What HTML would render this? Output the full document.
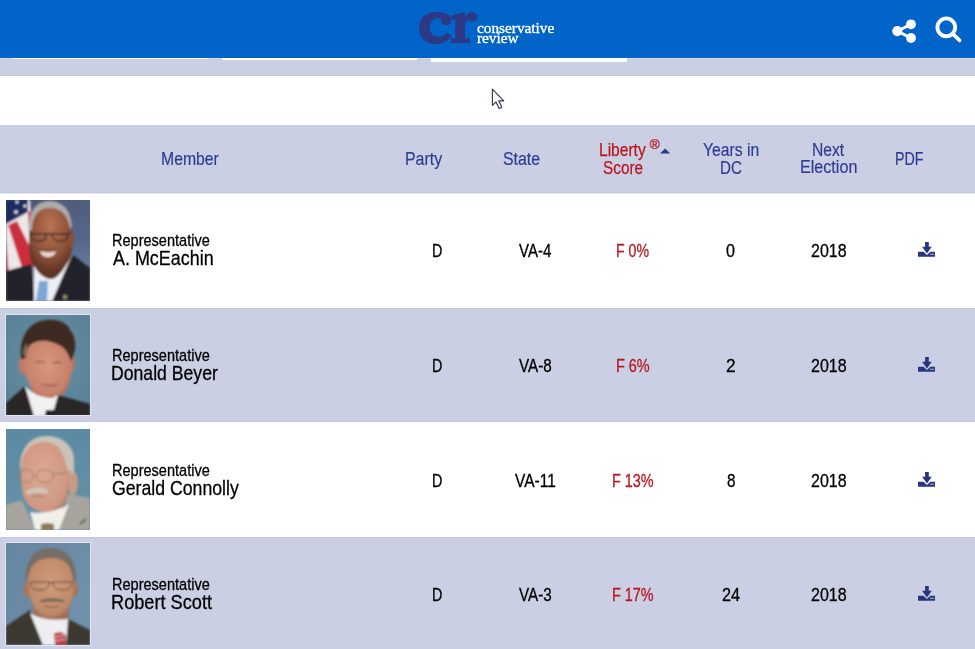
<!DOCTYPE html>
<html><head><meta charset="utf-8"><style>
html,body{margin:0;padding:0;width:975px;height:649px;overflow:hidden;background:#fff;position:relative}
.t{position:absolute;font-family:"Liberation Sans",sans-serif;line-height:1;white-space:nowrap;transform-origin:0 0;-webkit-text-stroke-color:currentColor}
.b{position:absolute;left:0;width:975px}
.ic{position:absolute}
.ph{position:absolute;left:6px;width:84px;outline:1px solid rgba(255,255,255,.45)}
</style></head><body>
<div class="b" style="top:0;height:58px;background:#0064c8"></div>
<div class="b" style="top:58px;height:18px;background:#cbcfe4;border-bottom:1px solid #c6c9df;box-sizing:border-box"></div>
<div class="b" style="top:58px;height:1px;background:#ddd9e6"></div>
<div style="position:absolute;left:13px;top:58px;width:195px;height:1px;background:#fff"></div>
<div style="position:absolute;left:222px;top:58px;width:195px;height:2px;background:#fff"></div>
<div style="position:absolute;left:431px;top:58px;width:196px;height:4px;background:#fff"></div>
<div class="b" style="top:125px;height:68px;background:#cbcfe4"></div>
<div class="b" style="top:192px;height:1px;background:#c6cae0"></div><div class="b" style="top:193px;height:1px;background:#e6e8f2"></div>
<div class="b" style="top:308px;height:114px;background:#cbcfe4;border-top:1px solid #c4c8de;border-bottom:1px solid #c4c8de;box-sizing:border-box"></div>
<div class="b" style="top:537px;height:112px;background:#cbcfe4;border-top:1px solid #c4c8de;box-sizing:border-box"></div>
<svg style="position:absolute;left:0;top:0" width="560" height="50" viewBox="0 0 560 50">
<path fill="#2c3a86" d="M451.5 19C451 14.5 444.5 12 436 12C425 12 419 19 419 28.5C419 38 426 44 436 44C443 44 448 41 452 36L447 32.5C445 35 442 36.7 439 36.7C433 36.7 429.8 33 429.8 27.5C429.8 22 433 18.2 438 18.2C440 18.2 441 19 441 20C440.5 22.5 442 25 446 25C449.5 25 451.5 22.5 451.5 19Z"/>
<path fill="#2c3a86" d="M451.8 15.2L463.5 12.3H465V17C467 13.5 470 12.3 472.5 12.3C475.5 12.3 477.4 14.5 477.4 17C477.4 19.5 475.5 21.5 472.5 21.5C470 21.5 468.5 20.5 467.5 19.5C466 21 465 23 465 25.5V38.2H470V43.1H450.9V38.2H455.2V19.7H451.8Z"/>
</svg>
<div style="position:absolute;left:476.5px;top:22.6px;font-family:'Liberation Serif',serif;font-weight:normal;font-size:15.6px;line-height:10.8px;color:#fff;transform:scaleX(0.98);-webkit-text-stroke:0.35px #fff;transform-origin:0 0;white-space:nowrap">conservative<br>review</div>
<svg style="position:absolute;left:880px;top:5px" width="90" height="45" viewBox="880 5 90 45">
<g fill="#fff"><circle cx="897.3" cy="31.1" r="5.1"/><circle cx="911" cy="24.3" r="4.9"/><circle cx="911" cy="38" r="4.9"/></g>
<path d="M897.3 31.1L911 24.3M897.3 31.1L911 38" stroke="#fff" stroke-width="2.9"/>
<circle cx="946.3" cy="27.3" r="8.9" fill="none" stroke="#fff" stroke-width="3.9"/>
<path d="M953.6 34.6L959.6 40.4" stroke="#fff" stroke-width="3.6" stroke-linecap="round"/>
</svg>
<div class="t" style="left:649.8px;top:137.6px;font-size:13.5px;color:#b9161f;-webkit-text-stroke-width:0.3px">&reg;</div>
<svg style="position:absolute;left:659px;top:147px" width="13" height="8" viewBox="659 147 13 8"><path d="M660 153.4L665.1 148.4L670.3 153.4Z" fill="#2b3a8a"/></svg>
<svg style="position:absolute;left:490px;top:87px" width="18" height="24" viewBox="0 0 18 24">
<path d="M2.4 2.2V18.3L6 15l3.2 6.4 2.6-1.2-3-6.3h4.9z" fill="#fff" stroke="#343a50" stroke-width="1.15" stroke-linejoin="round"/></svg>
<svg class="ph" style="top:200px" width="84" height="101" viewBox="0 0 84 101">
<defs><filter id="bl1" x="-5%" y="-5%" width="110%" height="110%"><feGaussianBlur stdDeviation="0.8"/></filter>
<linearGradient id="bg1" x1="0" y1="0" x2=".3" y2="1"><stop offset="0" stop-color="#4c5575"/><stop offset=".6" stop-color="#56668a"/><stop offset="1" stop-color="#6f82a4"/></linearGradient>
<radialGradient id="fc1" cx=".5" cy=".32" r=".62"><stop offset="0" stop-color="#ba7454"/><stop offset=".7" stop-color="#8c5038"/><stop offset="1" stop-color="#623626"/></radialGradient></defs>
<rect width="84" height="101" fill="url(#bg1)"/>
<g filter="url(#bl1)">
<path d="M0 0h24l1 16 1 60H0z" fill="#ece8ea"/>
<path d="M2 25l9-4 15 30v20l-8 3z" fill="#cc2f3e"/><path d="M0 62l4 14H0z" fill="#cc2f3e"/>
<path d="M22 12l3-1 1 20-3-2z" fill="#cc2f3e"/>
<path d="M0 40l3 36H0z" fill="#cc2f3e"/>
<path d="M0 0h22v12L0 24z" fill="#1e2a5e"/>
<g fill="#eeeef2"><circle cx="10" cy="12" r="1.8"/><circle cx="19" cy="6" r="1.6"/><circle cx="11" cy="2" r="1.5"/></g>
<path d="M27 56h38l-2 26H29z" fill="#5a3223"/><path d="M23 34C22 14 30 3 44 3s22 10 22 28l0 16c-1 16-8 28-22 29-14-1-21-13-21-29z" fill="url(#fc1)"/>
<path d="M23 30C22 12 30 1 43 1c13 0 22 8 23 26l-2 2C62 16 56 8 44 8 32 8 26 16 26 30z" fill="#aeaaa8"/>
<ellipse cx="65" cy="40" rx="3" ry="8" fill="#8a5038"/>
<g fill="none" stroke="#3a2a26" stroke-width="1.4"><path d="M25 34h15c1 5-2 7-7 7s-8-3-8-7z"/><path d="M46 34h16c0 5-3 7-8 7s-8-3-8-7z"/><path d="M40 34h6M62 34l3-2"/></g>
<path d="M34 51c5 1.5 11 1.5 16 0-1 4-4 6-8 6s-7-2-8-6z" fill="#e8d8d0"/><path d="M33 50c6 1 12 1 18 0" stroke="#5a3028" stroke-width="1.2" fill="none"/>
<path d="M0 71l25-7 4 37H0z" fill="#222229"/>
<path d="M84 68L67 55 46 101h38z" fill="#222229"/>
<path d="M28 66c5 8 11 13 17 13s12-8 21-24l-20 46H28z" fill="#eef0f4"/>
<path d="M33 81h9l-1 20H30z" fill="#7da6d6"/>
<circle cx="59" cy="97" r="2.2" fill="#9c8a68"/>
</g></svg>
<svg class="ph" style="top:315px" width="84" height="100" viewBox="0 0 84 100">
<defs><filter id="bl2" x="-5%" y="-5%" width="110%" height="110%"><feGaussianBlur stdDeviation="0.8"/></filter>
<radialGradient id="bg2" cx=".5" cy=".45" r=".75"><stop offset="0" stop-color="#6692a8"/><stop offset="1" stop-color="#587e92"/></radialGradient>
<radialGradient id="fc2" cx=".5" cy=".45" r=".6"><stop offset="0" stop-color="#d8977c"/><stop offset=".8" stop-color="#c7806a"/><stop offset="1" stop-color="#a86652"/></radialGradient></defs>
<rect width="84" height="100" fill="url(#bg2)"/>

<g filter="url(#bl2)">
<ellipse cx="16.5" cy="50" rx="3.8" ry="9.5" fill="#c07a64"/><ellipse cx="66" cy="49" rx="3" ry="8" fill="#b87460"/>
<path d="M22 60l30 0 2 24-26 4z" fill="#b87060"/><path d="M17 38C17 28 28 22 42 22s24 8 24 22c0 10-1 18-4 27-4 8-9 13-16 13s-15-4-21-12c-5-8-8-18-8-34z" fill="url(#fc2)"/>
<path d="M15 44C13 22 22 7 40 5c14-1 22 4 24 10 4 4 6 12 5 20l-4 12c-2-8-6-14-12-17-8-4-18-6-26-2-4 2-7 7-8 16z" fill="#3e2c22"/>
<path d="M17 40c0-6 2-10 4-12v14z" fill="#7a6a60"/>
<path d="M30 47c4-1 7 0 9 1M47 48c3-1 6-1 9 0" stroke="#8a5a50" stroke-width="1.3" fill="none"/>
<path d="M36 69c5 2 11 2 16 0" stroke="#9c5a50" stroke-width="1.8" fill="none"/>
<path d="M0 88L19 71 28 101H0z" fill="#2b2826"/>
<path d="M84 89L52 80 46 101H84z" fill="#2b2826"/>
<path d="M19 71c6 7 16 12 27 12l6-3-6 21H28z" fill="#f1f1f4"/><path d="M40 95h8l1 6h-10z" fill="#23222c"/>

</g></svg>
<svg class="ph" style="top:429px" width="84" height="101" viewBox="0 0 84 101">
<defs><filter id="bl3" x="-5%" y="-5%" width="110%" height="110%"><feGaussianBlur stdDeviation="0.8"/></filter>
<linearGradient id="bg3" x1="0" y1="0" x2="0" y2="1"><stop offset="0" stop-color="#5c8aa2"/><stop offset="1" stop-color="#6592a8"/></linearGradient>
<radialGradient id="fc3" cx=".45" cy=".45" r=".65"><stop offset="0" stop-color="#dca894"/><stop offset=".8" stop-color="#d09882"/><stop offset="1" stop-color="#b07a68"/></radialGradient></defs>
<rect width="84" height="101" fill="url(#bg3)"/>
<g filter="url(#bl3)">
<ellipse cx="67" cy="54" rx="5" ry="12" fill="#c99a86"/><path d="M14 40C13 20 24 7 40 7c15 0 27 8 28 23v14l-6 2z" fill="#c9c3b8"/><path d="M15 42C15 24 22 14 38 13c10 0 17 5 20 16l5 16c0 16-1 26-7 33-6 5-12 6-18 5-10-1-18-7-21-17-2-8-2-16-2-24z" fill="url(#fc3)"/>



<g fill="none" stroke="#9a7c58" stroke-width="1"><ellipse cx="19.5" cy="47" rx="8.5" ry="6.5"/><ellipse cx="39" cy="47" rx="8.5" ry="6.5"/><path d="M47.5 45.5l19-3"/></g>
<path d="M20 62c7-4 14-4 21-1l1 4c-7-2-14-2-21 1z" fill="#cfc8bc"/>
<path d="M26 68c4-1 8-1 12 0" stroke="#a06a5a" stroke-width="1.2" fill="none"/>
<path d="M0 76l16-5 13 30H0z" fill="#a7a49d"/>
<path d="M84 69l-22-4-9 36h31z" fill="#a7a49d"/>
<path d="M24 83c10 2 26 0 39-8l-10 26H29z" fill="#f0efea"/>
<path d="M35 95l6-1 7 1v6H35z" fill="#8e7c58"/>
<path d="M80 90l-6 5" stroke="#2a2a2a" stroke-width="1.2"/>
</g></svg>
<svg class="ph" style="top:543px" width="84" height="102" viewBox="0 0 84 102">
<defs><filter id="bl4" x="-5%" y="-5%" width="110%" height="110%"><feGaussianBlur stdDeviation="0.8"/></filter>
<linearGradient id="bg4" x1="0" y1="0" x2="1" y2=".6"><stop offset="0" stop-color="#6685a0"/><stop offset="1" stop-color="#7190ac"/></linearGradient>
<radialGradient id="fc4" cx=".5" cy=".45" r=".6"><stop offset="0" stop-color="#d09c7c"/><stop offset=".8" stop-color="#c08a6a"/><stop offset="1" stop-color="#9c6850"/></radialGradient></defs>
<rect width="84" height="102" fill="url(#bg4)"/>

<g filter="url(#bl4)">
<ellipse cx="21" cy="47" rx="3.5" ry="8" fill="#a8755a"/><ellipse cx="69" cy="46" rx="3" ry="8" fill="#a8755a"/>
<path d="M27 58h36l-1 22H28z" fill="#a06c52"/>
<path d="M22 36c0-14 10-22 23-22s23 8 23 22c0 14-2 24-6 30-4 6-10 9-17 9s-12-3-16-9c-4-6-7-16-7-30z" fill="url(#fc4)"/>
<path d="M20 40C18 18 28 5 44 5c16 0 26 10 26 30l-2 6-3-14c-3-8-10-12-20-12s-18 4-21 12z" fill="#746d66"/>
<g fill="none" stroke="#4e4038" stroke-width="0.9"><path d="M24 39h19c0 6-3 8-9 8s-10-2-10-8zM47 39h19c0 6-3 8-9 8s-10-2-10-8zM43 40h4"/></g>
<path d="M34 57c7-2.5 16-2.5 24 0l1 2.5c-8-1-17-1-25 0z" fill="#7a6a60"/>
<path d="M38 63c5 1.5 10 1.5 15 0" stroke="#8a5040" stroke-width="1.3" fill="none"/>
<path d="M0 83l24-16 13 35H0z" fill="#3e3830"/>
<path d="M84 87l-22-11-2 26h24z" fill="#3e3830"/>
<path d="M24 70c8 5 18 8 38 6l-2 26H37z" fill="#eeeef2"/>
<path d="M48 90l7-1 5 3v10h-11z" fill="#c03a3c"/>
<path d="M49 94l10-2M49 98l10-2" stroke="#e6d6d6" stroke-width="0.9"/>
</g></svg>

<div class="t" style="left:161.20px;top:150.05px;font-size:18.04px;color:#2e3d94;transform:scaleX(0.8750);-webkit-text-stroke-width:0.2px;">Member</div><div class="t" style="left:405.19px;top:150.15px;font-size:18.04px;color:#2e3d94;transform:scaleX(0.8822);-webkit-text-stroke-width:0.2px;">Party</div><div class="t" style="left:503.28px;top:150.15px;font-size:18.04px;color:#2e3d94;transform:scaleX(0.8817);-webkit-text-stroke-width:0.2px;">State</div><div class="t" style="left:598.92px;top:141.05px;font-size:18.04px;color:#b9161f;transform:scaleX(0.8628);-webkit-text-stroke-width:0.25px;">Liberty</div><div class="t" style="left:602.61px;top:158.65px;font-size:18.04px;color:#b9161f;transform:scaleX(0.8506);-webkit-text-stroke-width:0.25px;">Score</div><div class="t" style="left:703.15px;top:140.85px;font-size:18.04px;color:#2e3d94;transform:scaleX(0.8722);-webkit-text-stroke-width:0.2px;">Years in</div><div class="t" style="left:720.15px;top:158.55px;font-size:18.04px;color:#2e3d94;transform:scaleX(0.8385);-webkit-text-stroke-width:0.2px;">DC</div><div class="t" style="left:812.11px;top:140.65px;font-size:18.04px;color:#2e3d94;transform:scaleX(0.8679);-webkit-text-stroke-width:0.2px;">Next</div><div class="t" style="left:800.17px;top:158.35px;font-size:18.04px;color:#2e3d94;transform:scaleX(0.8943);-webkit-text-stroke-width:0.2px;">Election</div><div class="t" style="left:894.62px;top:149.85px;font-size:18.04px;color:#2e3d94;transform:scaleX(0.7914);-webkit-text-stroke-width:0.2px;">PDF</div><div class="t" style="left:111.50px;top:232.22px;font-size:16.29px;color:#000;transform:scaleX(0.8929);-webkit-text-stroke-width:0.3px;">Representative</div><div class="t" style="left:112.56px;top:248.23px;font-size:20.80px;color:#000;transform:scaleX(0.8618);-webkit-text-stroke-width:0.3px;">A. McEachin</div><div class="t" style="left:432.12px;top:243.37px;font-size:17.89px;color:#000;transform:scaleX(0.8019);-webkit-text-stroke-width:0.3px;">D</div><div class="t" style="left:519.42px;top:243.37px;font-size:17.89px;color:#000;transform:scaleX(0.8404);-webkit-text-stroke-width:0.3px;">VA-4</div><div class="t" style="left:616.23px;top:243.37px;font-size:17.89px;color:#b9161f;transform:scaleX(0.7898);-webkit-text-stroke-width:0.3px;">F 0%</div><div class="t" style="left:726.25px;top:243.37px;font-size:17.89px;color:#000;transform:scaleX(0.9013);-webkit-text-stroke-width:0.3px;">0</div><div class="t" style="left:810.70px;top:243.37px;font-size:17.89px;color:#000;transform:scaleX(0.8948);-webkit-text-stroke-width:0.3px;">2018</div><svg class="ic" style="left:918px;top:242.2px" width="17" height="15" viewBox="0 0 17 15"><path d="M7.1 0h3.7v4.8h3L8.95 11.4 4.1 4.8h3z" fill="#283680"/><path d="M0 9.7h5.6l3.35 3.2 3.35-3.2H17v5H0z" fill="#283680"/><rect x="12.4" y="11.6" width="1.2" height="1.4" fill="#fff" opacity=".75"/><rect x="14.4" y="11.6" width="1.2" height="1.4" fill="#fff" opacity=".75"/></svg><div class="t" style="left:111.50px;top:347.22px;font-size:16.29px;color:#000;transform:scaleX(0.8929);-webkit-text-stroke-width:0.3px;">Representative</div><div class="t" style="left:111.15px;top:363.23px;font-size:20.80px;color:#000;transform:scaleX(0.8478);-webkit-text-stroke-width:0.3px;">Donald Beyer</div><div class="t" style="left:432.12px;top:358.37px;font-size:17.89px;color:#000;transform:scaleX(0.8019);-webkit-text-stroke-width:0.3px;">D</div><div class="t" style="left:519.32px;top:358.37px;font-size:17.89px;color:#000;transform:scaleX(0.8517);-webkit-text-stroke-width:0.3px;">VA-8</div><div class="t" style="left:615.81px;top:358.37px;font-size:17.89px;color:#b9161f;transform:scaleX(0.8075);-webkit-text-stroke-width:0.3px;">F 6%</div><div class="t" style="left:726.43px;top:358.37px;font-size:17.89px;color:#000;transform:scaleX(0.9705);-webkit-text-stroke-width:0.3px;">2</div><div class="t" style="left:810.70px;top:358.37px;font-size:17.89px;color:#000;transform:scaleX(0.8948);-webkit-text-stroke-width:0.3px;">2018</div><svg class="ic" style="left:918px;top:357.2px" width="17" height="15" viewBox="0 0 17 15"><path d="M7.1 0h3.7v4.8h3L8.95 11.4 4.1 4.8h3z" fill="#283680"/><path d="M0 9.7h5.6l3.35 3.2 3.35-3.2H17v5H0z" fill="#283680"/><rect x="12.4" y="11.6" width="1.2" height="1.4" fill="#fff" opacity=".75"/><rect x="14.4" y="11.6" width="1.2" height="1.4" fill="#fff" opacity=".75"/></svg><div class="t" style="left:111.50px;top:461.52px;font-size:16.29px;color:#000;transform:scaleX(0.8929);-webkit-text-stroke-width:0.3px;">Representative</div><div class="t" style="left:111.72px;top:477.53px;font-size:20.80px;color:#000;transform:scaleX(0.8504);-webkit-text-stroke-width:0.3px;">Gerald Connolly</div><div class="t" style="left:432.12px;top:472.67px;font-size:17.89px;color:#000;transform:scaleX(0.8019);-webkit-text-stroke-width:0.3px;">D</div><div class="t" style="left:514.62px;top:472.67px;font-size:17.89px;color:#000;transform:scaleX(0.8674);-webkit-text-stroke-width:0.3px;">VA-11</div><div class="t" style="left:612.11px;top:472.67px;font-size:17.89px;color:#b9161f;transform:scaleX(0.8064);-webkit-text-stroke-width:0.3px;">F 13%</div><div class="t" style="left:726.85px;top:472.67px;font-size:17.89px;color:#000;transform:scaleX(0.8563);-webkit-text-stroke-width:0.3px;">8</div><div class="t" style="left:810.70px;top:472.67px;font-size:17.89px;color:#000;transform:scaleX(0.8948);-webkit-text-stroke-width:0.3px;">2018</div><svg class="ic" style="left:918px;top:471.5px" width="17" height="15" viewBox="0 0 17 15"><path d="M7.1 0h3.7v4.8h3L8.95 11.4 4.1 4.8h3z" fill="#283680"/><path d="M0 9.7h5.6l3.35 3.2 3.35-3.2H17v5H0z" fill="#283680"/><rect x="12.4" y="11.6" width="1.2" height="1.4" fill="#fff" opacity=".75"/><rect x="14.4" y="11.6" width="1.2" height="1.4" fill="#fff" opacity=".75"/></svg><div class="t" style="left:111.50px;top:576.22px;font-size:16.29px;color:#000;transform:scaleX(0.8929);-webkit-text-stroke-width:0.3px;">Representative</div><div class="t" style="left:111.10px;top:592.23px;font-size:20.80px;color:#000;transform:scaleX(0.8740);-webkit-text-stroke-width:0.3px;">Robert Scott</div><div class="t" style="left:432.12px;top:587.37px;font-size:17.89px;color:#000;transform:scaleX(0.8019);-webkit-text-stroke-width:0.3px;">D</div><div class="t" style="left:519.12px;top:587.37px;font-size:17.89px;color:#000;transform:scaleX(0.8517);-webkit-text-stroke-width:0.3px;">VA-3</div><div class="t" style="left:612.11px;top:587.37px;font-size:17.89px;color:#b9161f;transform:scaleX(0.8064);-webkit-text-stroke-width:0.3px;">F 17%</div><div class="t" style="left:721.89px;top:587.37px;font-size:17.89px;color:#000;transform:scaleX(0.9095);-webkit-text-stroke-width:0.3px;">24</div><div class="t" style="left:810.70px;top:587.37px;font-size:17.89px;color:#000;transform:scaleX(0.8948);-webkit-text-stroke-width:0.3px;">2018</div><svg class="ic" style="left:918px;top:586.2px" width="17" height="15" viewBox="0 0 17 15"><path d="M7.1 0h3.7v4.8h3L8.95 11.4 4.1 4.8h3z" fill="#283680"/><path d="M0 9.7h5.6l3.35 3.2 3.35-3.2H17v5H0z" fill="#283680"/><rect x="12.4" y="11.6" width="1.2" height="1.4" fill="#fff" opacity=".75"/><rect x="14.4" y="11.6" width="1.2" height="1.4" fill="#fff" opacity=".75"/></svg>
</body></html>
